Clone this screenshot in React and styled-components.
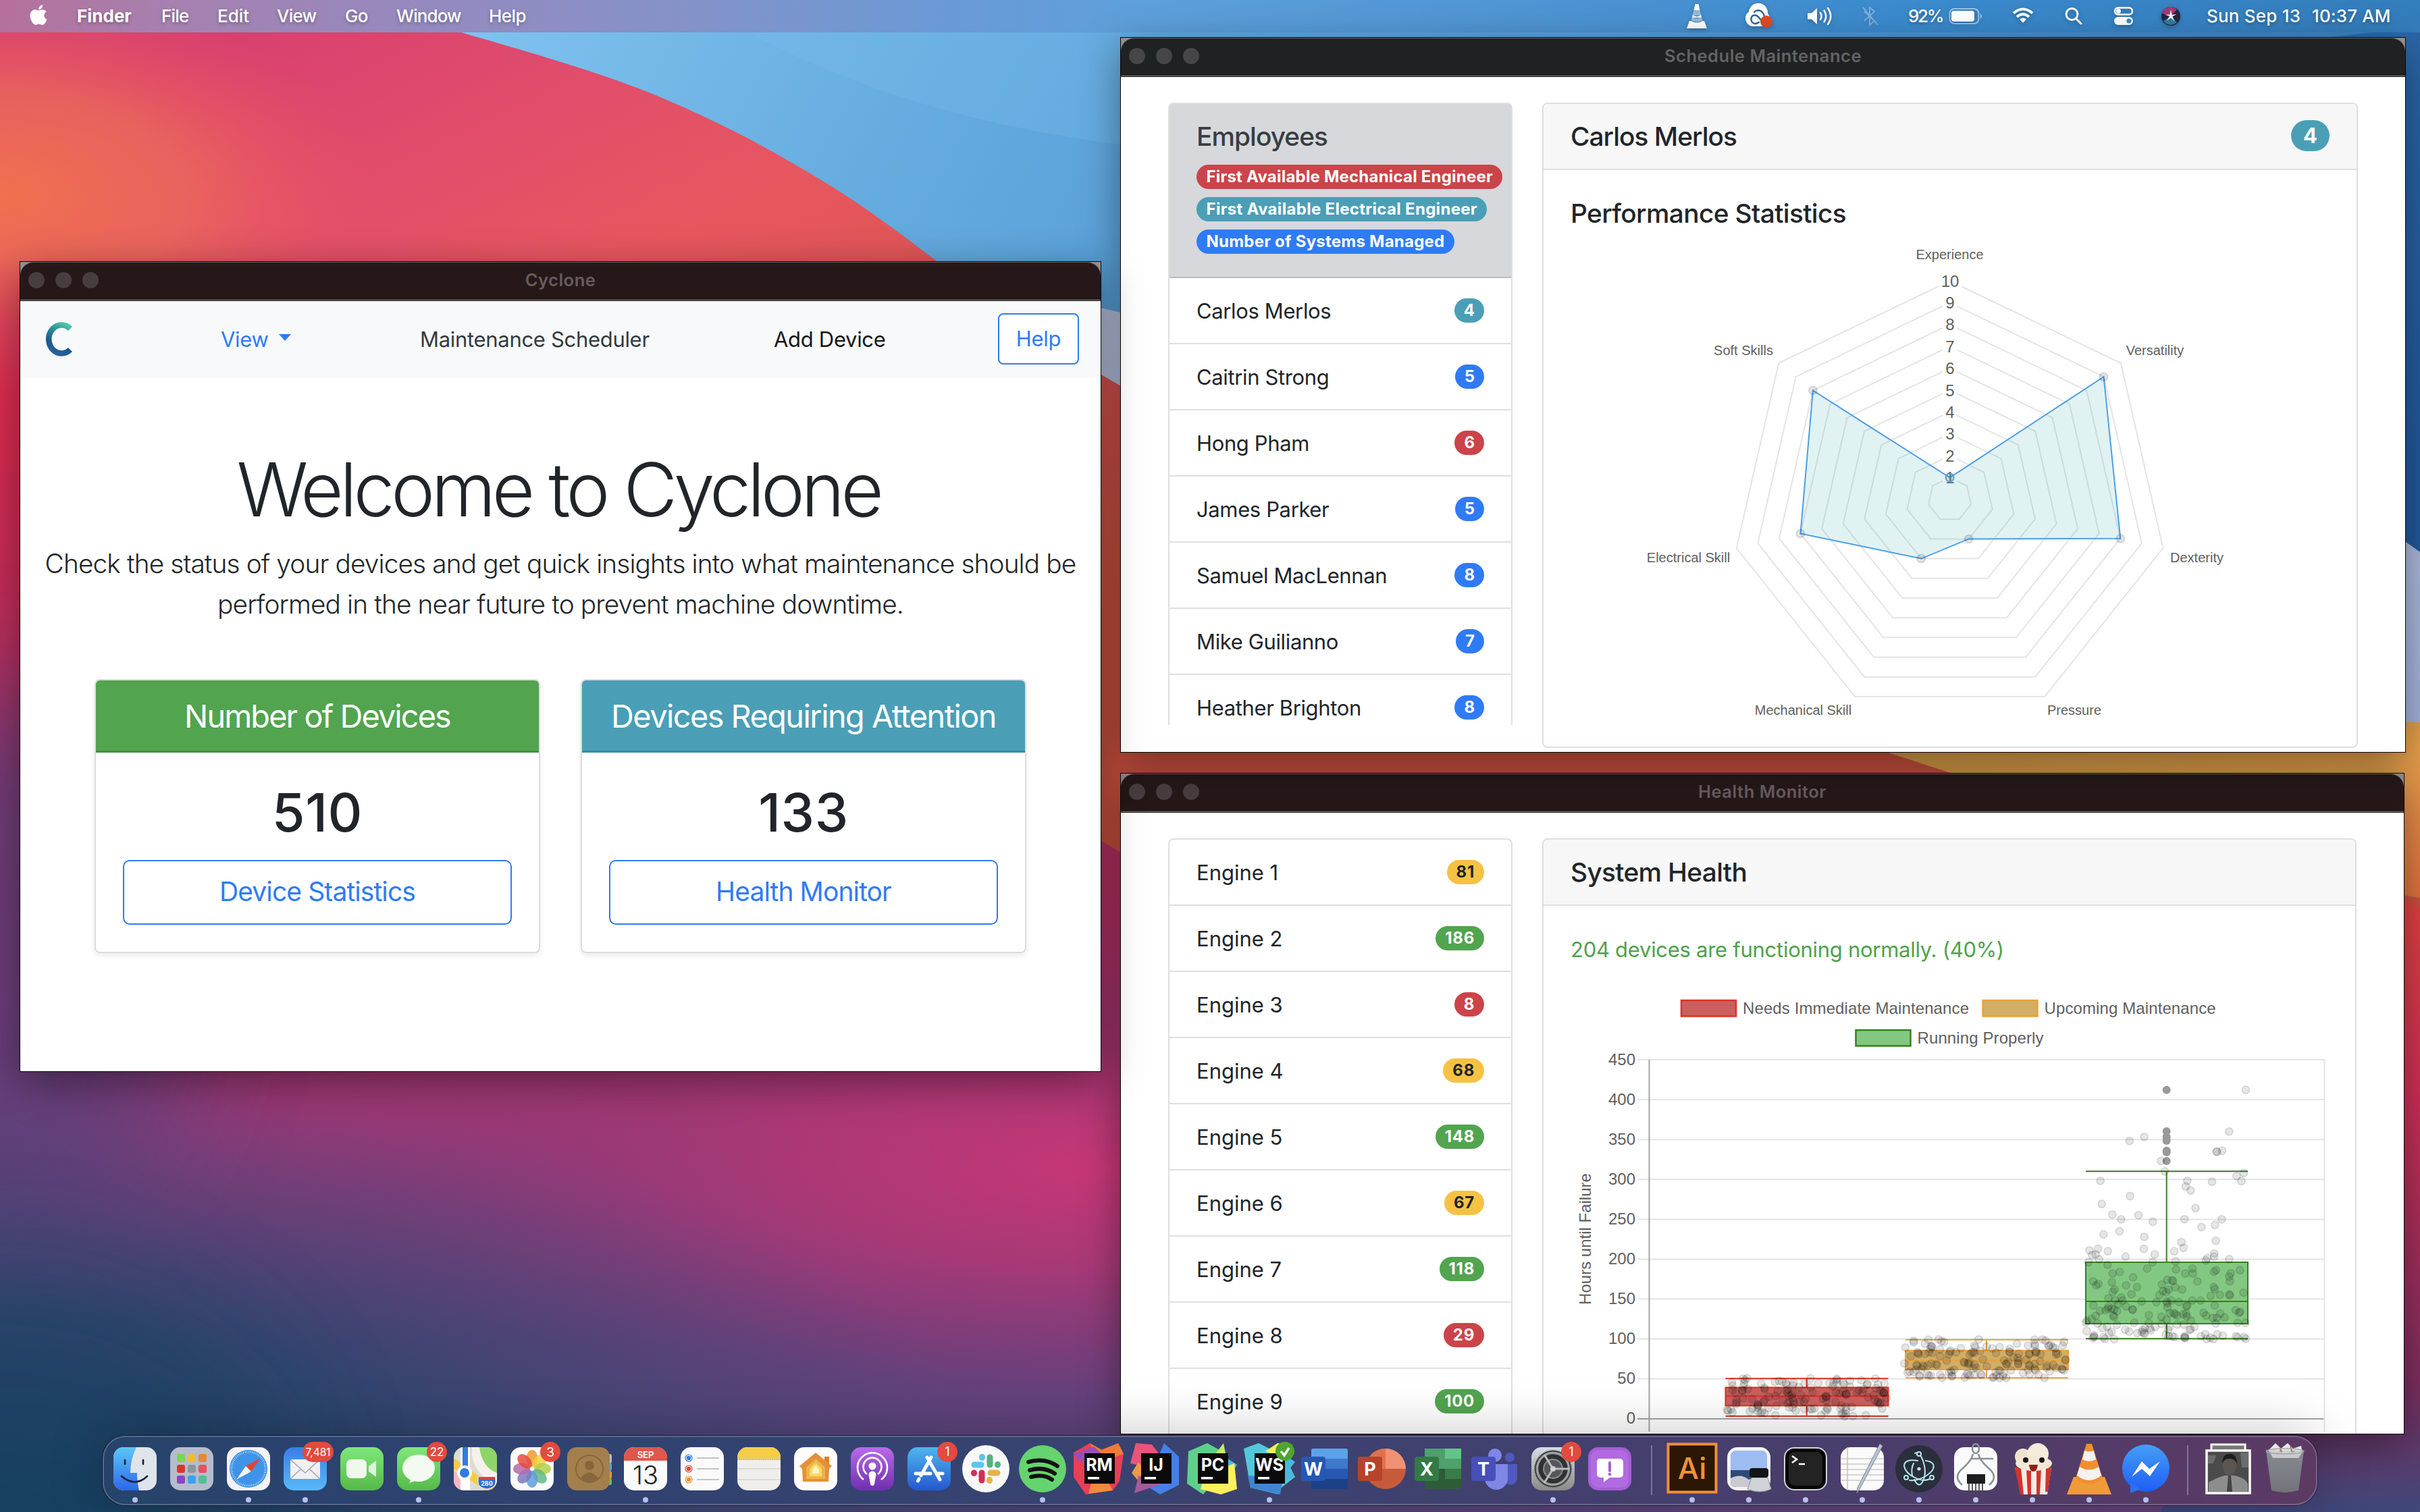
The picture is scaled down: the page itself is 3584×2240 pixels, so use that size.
import React from "react";
import styled, { createGlobalStyle } from "styled-components";
import { FaApple } from "react-icons/fa";

const GlobalStyle = createGlobalStyle`
  * { box-sizing: border-box; }
  html, body { margin: 0; padding: 0; overflow: hidden; }
  body { font-family: Inter, "Liberation Sans", sans-serif; color: #212529; }
  svg { display: block; overflow: visible; }
`;

/* ---------- desktop ---------- */

const Desktop = styled.main`
  position: relative;
  width: 3584px;
  height: 2240px;
  overflow: hidden;
  display: flex;
  flex-direction: column;
  justify-content: space-between;
  background: #5aa2da;
`;

const WallpaperLayer = styled.div`
  position: absolute;
  inset: 0;
`;

function Wallpaper() {
  return (
    <WallpaperLayer>
      <svg width="3584" height="2240" viewBox="0 0 3584 2240">
        <defs>
          <linearGradient id="sky" x1="0.15" y1="0" x2="1" y2="0.3">
            <stop offset="0" stopColor="#86c8f5" />
            <stop offset="0.25" stopColor="#67addf" />
            <stop offset="0.55" stopColor="#4b94d3" />
            <stop offset="1" stopColor="#22599b" />
          </linearGradient>
          <linearGradient id="haze" x1="0" y1="0" x2="0" y2="1">
            <stop offset="0" stopColor="#b9c2de" />
            <stop offset="1" stopColor="#9fb0dd" />
          </linearGradient>
          <linearGradient id="flame" gradientUnits="userSpaceOnUse" x1="420" y1="0" x2="1000" y2="1200">
            <stop offset="0" stopColor="#d7406f" />
            <stop offset="0.2" stopColor="#e04c6c" />
            <stop offset="0.42" stopColor="#e7575f" />
            <stop offset="1" stopColor="#c8503f" />
          </linearGradient>
          <radialGradient id="ember">
            <stop offset="0" stopColor="#f0714f" />
            <stop offset="0.5" stopColor="#ee6b58" stopOpacity="0.75" />
            <stop offset="1" stopColor="#e8575e" stopOpacity="0" />
          </radialGradient>
          <linearGradient id="blush" gradientUnits="userSpaceOnUse" x1="0" y1="380" x2="0" y2="720">
            <stop offset="0" stopColor="#dc2d50" stopOpacity="0" />
            <stop offset="0.6" stopColor="#dc2d50" />
            <stop offset="1" stopColor="#d42a50" />
          </linearGradient>
          <linearGradient id="amber" x1="0" y1="0" x2="1" y2="1">
            <stop offset="0" stopColor="#c99a45" />
            <stop offset="0.6" stopColor="#e8a14c" />
            <stop offset="1" stopColor="#e0703f" />
          </linearGradient>
          <linearGradient id="deep" gradientUnits="userSpaceOnUse" x1="160" y1="700" x2="0" y2="2240">
            <stop offset="0" stopColor="#d42a50" />
            <stop offset="0.25" stopColor="#b72f60" />
            <stop offset="0.5" stopColor="#aa3470" />
            <stop offset="0.64" stopColor="#8c3b78" />
            <stop offset="0.78" stopColor="#66417b" />
            <stop offset="0.9" stopColor="#4b4679" />
            <stop offset="1" stopColor="#354873" />
          </linearGradient>
          <radialGradient id="rose">
            <stop offset="0" stopColor="#c73776" />
            <stop offset="0.45" stopColor="#b13877" stopOpacity="0.75" />
            <stop offset="1" stopColor="#8c3b78" stopOpacity="0" />
          </radialGradient>
          <radialGradient id="navy">
            <stop offset="0" stopColor="#173f60" />
            <stop offset="0.45" stopColor="#29456c" stopOpacity="0.8" />
            <stop offset="1" stopColor="#4b4779" stopOpacity="0" />
          </radialGradient>
          <linearGradient id="edge" gradientUnits="userSpaceOnUse" x1="0" y1="1300" x2="0" y2="2240">
            <stop offset="0" stopColor="#e2453f" />
            <stop offset="0.35" stopColor="#cf2f57" />
            <stop offset="0.8" stopColor="#7d2f5f" />
            <stop offset="1" stopColor="#3f4779" />
          </linearGradient>
          <filter id="soft" x="-40%" y="-40%" width="180%" height="180%">
            <feGaussianBlur stdDeviation="90" />
          </filter>
        </defs>
        <rect width="3584" height="2240" fill="url(#sky)" />
        <path d="M1090 40 C1300 150 1480 190 1659 214 C2300 280 3000 100 3584 40 L3584 0 L1000 0Z" fill="#79bdec" opacity="0.28" />
        <path d="M1500 440 C1640 450 1720 470 1900 560 L3400 700 C3500 760 3560 800 3584 818 L3584 1240 L1500 1240Z" fill="url(#haze)" />
        <path d="M0 0 L520 0 C580 12 630 28 683 48 C800 82 890 108 971 141 C1060 178 1130 215 1200 257 C1270 298 1330 343 1386 386 C1470 450 1560 515 1660 572 C1800 650 2000 800 2500 980 L3584 1100 L3584 1420 L0 1420Z" fill="url(#flame)" />
        <ellipse cx="0" cy="290" rx="560" ry="300" fill="url(#ember)" />
        <rect x="0" y="380" width="800" height="700" fill="url(#blush)" />
        <path d="M0 700 C600 700 1300 1060 1659 1262 L2000 1420 L3584 1420 L3584 2240 L0 2240Z" fill="url(#deep)" />
        <path d="M2793 1114 C3000 1180 3300 1290 3584 1330 L3584 1070 L2600 1060Z" fill="url(#amber)" />
        <path d="M3540 1318 L3584 1345 L3584 2240 L3200 2240Z" fill="url(#edge)" />
        <ellipse cx="1640" cy="1730" rx="1050" ry="330" fill="url(#rose)" />
        <ellipse cx="-60" cy="1440" rx="340" ry="420" fill="#57407b" opacity="0.75" filter="url(#soft)" />
        <ellipse cx="0" cy="2240" rx="1500" ry="640" fill="url(#navy)" />
        <ellipse cx="0" cy="2200" rx="420" ry="300" fill="#173f61" opacity="0.5" filter="url(#soft)" />
      </svg>
    </WallpaperLayer>
  );
}

/* ---------- menu bar ---------- */

const MenuBarStrip = styled.header`
  position: relative;
  height: 48px;
  display: flex;
  justify-content: space-between;
  align-items: center;
  padding: 0 42px 0 43px;
  color: #fff;
  font-size: 26px;
  font-weight: 500;
  text-shadow: 0 2px 5px rgba(0, 0, 0, 0.3);
  background: linear-gradient(90deg, #b5709c 0, #a681b0 260px, #9689be 600px, #8592c8 1000px, #6a9ad6 1400px, #5da0db 1700px, #4b92d2 2400px, #3b8bce 2800px, #347dbc 3584px);
`;

const MenuGroup = styled.nav`
  display: flex;
  align-items: center;
  height: 48px;
  padding-bottom: 1px;
`;

const MenuItem = styled.span`
  margin-left: ${(p) => p.$gap}px;
  width: ${(p) => p.$w}px;
  white-space: pre;
  font-weight: ${(p) => (p.$bold ? 700 : 500)};
  letter-spacing: ${(p) => p.$ls || 0}em;
`;

const StatusIcon = styled.svg`
  width: ${(p) => p.$w}px;
  height: 48px;
  margin-left: ${(p) => p.$gap}px;
  filter: drop-shadow(0 2px 3px rgba(0, 0, 0, 0.25));
`;

const AppleMark = styled(FaApple)`
  width: 28px;
  height: 34px;
  margin-bottom: 3px;
`;

function MenuBar() {
  return (
    <MenuBarStrip>
      <MenuGroup>
        <AppleMark />
        <MenuItem $gap={43} $w={82} $bold>Finder</MenuItem>
        <MenuItem $gap={43} $w={42} $ls={-0.03}>File</MenuItem>
        <MenuItem $gap={41} $w={48}>Edit</MenuItem>
        <MenuItem $gap={40} $w={60} $ls={-0.03}>View</MenuItem>
        <MenuItem $gap={41} $w={35} $ls={-0.03}>Go</MenuItem>
        <MenuItem $gap={41} $w={97} $ls={-0.035}>Window</MenuItem>
        <MenuItem $gap={40} $w={58} $ls={-0.02}>Help</MenuItem>
      </MenuGroup>
      <MenuGroup>
        <StatusIcon $w={32} viewBox="0 0 32 48" fill="#fff">
          <path d="M13.5 6h5l2 9h-9z" />
          <path d="M11.500 15h9l2 8h-13z" opacity=".45" />
          <path d="M10 22q6 5 12 0l1 4h-14z" />
          <path d="M9 25q7 4 14 0l1.500 5q-8.500 5-17 0z" opacity=".45" />
          <path d="M5 31h2.500q8.500 5 17 0H27l4 11H1z" />
        </StatusIcon>
        <StatusIcon $w={44} $gap={54} viewBox="0 0 44 48">
          <path d="M12 39A12 12 0 0 1 7 17.500 14 14 0 0 1 35 20q5 5 2 13l-8 6z" fill="#fff" />
          <path d="M22 33q-6 4-10 0-4-6 1-10 5-2 9 3l5 6" fill="none" stroke="#2b669f" strokeWidth="2.400" strokeLinecap="round" />
          <path d="M15 18q5-5 11-1 4 4 4 9" fill="none" stroke="#2b669f" strokeWidth="2.400" strokeLinecap="round" />
          <circle cx="33" cy="32" r="9" fill="#dd4d26" />
        </StatusIcon>
        <StatusIcon $w={38} $gap={49} viewBox="0 0 38 48" fill="none" stroke="#fff" strokeWidth="2.500" strokeLinecap="round">
          <path d="M1 19.500h6l8-7.500v24l-8-7.500H1z" fill="#fff" stroke="none" />
          <path d="M20 19q3 5 0 10M25.500 15.500q5.500 8.500 0 17M31 12q8.500 12 0 24" />
        </StatusIcon>
        <StatusIcon $w={24} $gap={44} viewBox="0 0 24 48" fill="none" stroke="#fff" strokeWidth="2" opacity=".3">
          <path d="M3 17l15 14-7 6V11l7 6L3 31M1 11l22 26" />
        </StatusIcon>
        <MenuItem $gap={44} $w={58} $ls={-0.09}>92%</MenuItem>
        <StatusIcon $w={50} $gap={2} viewBox="0 0 50 48">
          <rect x="1.500" y="13" width="43" height="22" rx="7" fill="none" stroke="#fff" strokeOpacity=".5" strokeWidth="2" />
          <rect x="4" y="16" width="34" height="16" rx="4" fill="#fff" />
          <path d="M47 20q4 4 0 8z" fill="#fff" opacity=".6" />
        </StatusIcon>
        <StatusIcon $w={32} $gap={44} viewBox="0 0 32 48" fill="none" stroke="#fff" strokeWidth="4">
          <path d="M2 19.500q14-12 28 0M7 25q9-8 18 0" />
          <path d="M16 34l-5-5.500q5-4 10 0z" fill="#fff" stroke="none" />
        </StatusIcon>
        <StatusIcon $w={27} $gap={46} viewBox="0 0 27 48" fill="none" stroke="#fff" strokeWidth="3" strokeLinecap="round">
          <circle cx="10.500" cy="21" r="8.500" />
          <path d="M17 28l7 7" />
        </StatusIcon>
        <StatusIcon $w={30} $gap={45} viewBox="0 0 30 48">
          <rect x="2" y="11.500" width="26" height="10" rx="5" fill="none" stroke="#fff" strokeWidth="2.500" />
          <circle cx="7.500" cy="16.500" r="3.500" fill="#fff" />
          <rect x="1" y="25" width="28" height="12" rx="6" fill="#fff" />
          <circle cx="23" cy="31" r="3.600" fill="#3c86c6" />
        </StatusIcon>
        <StatusIcon $w={30} $gap={40} viewBox="0 0 30 48">
          <circle cx="15" cy="24" r="14" fill="#25243f" />
          <path d="M2 20a13 13 0 0 1 22-6l-9 10z" fill="#c23f86" opacity=".8" />
          <path d="M4 31a13 13 0 0 0 20 2l-9-9z" fill="#3a8fb8" opacity=".8" />
          <path d="M15 14l1.500 8 7-1-6 3.500 3 7-5.500-5-6 4 4-6.500-6-2 6.500-.5z" fill="#eafcff" />
        </StatusIcon>
        <MenuItem $gap={38} $w={156} $ls={0.008}>Sun Sep 13</MenuItem>
        <MenuItem $gap={0} $w={118} $ls={0.004}>10:37 AM</MenuItem>
      </MenuGroup>
    </MenuBarStrip>
  );
}

/* ---------- window chrome ---------- */

const WindowFrame = styled.section`
  position: absolute;
  left: ${(p) => p.$x}px;
  top: ${(p) => p.$y}px;
  width: ${(p) => p.$w}px;
  height: ${(p) => p.$h}px;
  display: flex;
  flex-direction: column;
  background: #fff;
  box-shadow: 0 0 0 1px #0b0708, 0 16px 56px rgba(0, 0, 0, 0.42);
`;

const TitleBarBack = styled.div`
  flex: none;
  height: 58px;
  background: #908f8e;
  border-bottom: 1px solid #000;
`;

const TitleBar = styled.div`
  height: 56px;
  display: grid;
  grid-template-columns: 150px 1fr 150px;
  align-items: center;
  border-top: 1px solid #6d6869;
  border-radius: 20px 20px 0 0;
  background: ${(p) => (p.$warm ? "#261819" : "#202123")};
`;

const TrafficLights = styled.div`
  display: flex;
  gap: 16px;
  padding: 0 0 3px 12px;
`;

const Light = styled.i`
  width: 24px;
  height: 24px;
  border-radius: 50%;
  background: ${(p) => (p.$warm ? "#4a3d3f" : "#464648")};
`;

const WindowTitle = styled.h2`
  margin: 0 0 4px;
  text-align: center;
  font-size: 25.5px;
  font-weight: 600;
  letter-spacing: 0.02em;
  color: ${(p) => (p.$warm ? "#685b5d" : "#626365")};
`;

const WindowBody = styled.div`
  flex: 1;
  min-height: 0;
  overflow: hidden;
`;

function Window({ title, warm, x, y, w, h, children }) {
  return (
    <WindowFrame $x={x} $y={y} $w={w} $h={h}>
      <TitleBarBack>
        <TitleBar $warm={warm}>
          <TrafficLights>
            <Light $warm={warm} />
            <Light $warm={warm} />
            <Light $warm={warm} />
          </TrafficLights>
          <WindowTitle $warm={warm}>{title}</WindowTitle>
        </TitleBar>
      </TitleBarBack>
      <WindowBody>{children}</WindowBody>
    </WindowFrame>
  );
}

/* ---------- Cyclone home ---------- */

const Navbar = styled.nav`
  height: 114px;
  display: flex;
  align-items: center;
  padding: 0 32px 2px 36px;
  background: #f7f9fa;
  font-size: 31px;
  letter-spacing: -0.01em;
`;

const NavLink = styled.a`
  display: flex;
  align-items: center;
  gap: 15px;
  margin-left: ${(p) => p.$gap}px;
  width: ${(p) => p.$w}px;
  white-space: nowrap;
  color: ${(p) => p.$color};
`;

const Caret = styled.i`
  border: 9px solid transparent;
  border-top: 10px solid #2f7bf6;
  border-bottom: 0;
  margin-top: -4px;
`;

const HelpButton = styled.button`
  margin-left: auto;
  width: 120px;
  height: 76px;
  padding: 0 0 1px;
  border: 2px solid #2f7bf6;
  border-radius: 8px;
  background: #fff;
  color: #2f7bf6;
  font: inherit;
  letter-spacing: inherit;
`;

const Hero = styled.div`
  display: flex;
  flex-direction: column;
  align-items: center;
  padding-top: 98px;
  text-align: center;
`;

const HeroTitle = styled.h1`
  margin: 0 6px 13px 0;
  font-size: 109.5px;
  line-height: 134px;
  font-weight: 300;
  letter-spacing: -0.0495em;
`;

const Lead = styled.p`
  margin: 0;
  font-size: 38.8px;
  line-height: 60px;
  font-weight: 300;
  letter-spacing: -0.0226em;
  white-space: pre-line;
`;

const CardDeck = styled.div`
  display: flex;
  gap: 60px;
  margin-top: 81px;
`;

const StatCard = styled.article`
  width: 660px;
  height: 406px;
  border: 2px solid #dcdcdc;
  border-radius: 8px;
  overflow: hidden;
  background: #fff;
  box-shadow: 0 4px 8px rgba(0, 0, 0, 0.08);
`;

const StatHeader = styled.header`
  height: 107px;
  line-height: 106px;
  border-bottom: 3px solid rgba(0, 0, 0, 0.14);
  background: ${(p) => p.$color};
  color: #fff;
  font-size: 46.8px;
  letter-spacing: ${(p) => p.$ls}em;
`;

const StatBody = styled.div`
  display: flex;
  flex-direction: column;
  align-items: stretch;
  gap: 24px;
  padding: 40px;
`;

const StatNumber = styled.strong`
  font-size: 79px;
  line-height: 96px;
  font-weight: 500;
  letter-spacing: 0.008em;
`;

const OutlineButton = styled.button`
  height: 96px;
  margin-top: -1px;
  padding: 0 0 3px;
  border: 2px solid #2f7bf6;
  border-radius: 10px;
  background: #fff;
  color: #2f7bf6;
  font: inherit;
  font-size: 39px;
  letter-spacing: -0.023em;
`;

function CycloneLogo() {
  return (
    <svg width="46" height="54" viewBox="0 0 46 54">
      <defs>
        <linearGradient id="cyc" x1="0.8" y1="0" x2="0.4" y2="1">
          <stop offset="0" stopColor="#4cc3a5" />
          <stop offset="0.35" stopColor="#2b8a99" />
          <stop offset="0.75" stopColor="#1c5a8c" />
          <stop offset="1" stopColor="#2a5f9e" />
        </linearGradient>
      </defs>
      <path d="M38 12 A19 21 0 1 0 38 43" fill="none" stroke="url(#cyc)" strokeWidth="8.500" />
    </svg>
  );
}

function CycloneWindow() {
  return (
    <Window title="Cyclone" warm x={30} y={388} w={1600} h={1199}>
      <Navbar>
        <CycloneLogo />
        <NavLink $gap={215} $w={110} $color="#2f7bf6">View <Caret /></NavLink>
        <NavLink $gap={185} $w={342} $color="#343a40">Maintenance Scheduler</NavLink>
        <NavLink $gap={182} $w={170} $color="#141619">Add Device</NavLink>
        <HelpButton>Help</HelpButton>
      </Navbar>
      <Hero>
        <HeroTitle>Welcome to Cyclone</HeroTitle>
        <Lead>
          {"Check the status of your devices and get quick insights into what maintenance should be\nperformed in the near future to prevent machine downtime."}
        </Lead>
        <CardDeck>
          <StatCard>
            <StatHeader $color="#52a44f" $ls={-0.04}>Number of Devices</StatHeader>
            <StatBody>
              <StatNumber>510</StatNumber>
              <OutlineButton>Device Statistics</OutlineButton>
            </StatBody>
          </StatCard>
          <StatCard>
            <StatHeader $color="#4a9fb6" $ls={-0.0325}>Devices Requiring Attention</StatHeader>
            <StatBody>
              <StatNumber>133</StatNumber>
              <OutlineButton>Health Monitor</OutlineButton>
            </StatBody>
          </StatCard>
        </CardDeck>
      </Hero>
    </Window>
  );
}

/* ---------- list + detail panes ---------- */

const TONES = {
  red: ["#cb444a", "#fff"],
  teal: ["#4a9fb6", "#fff"],
  blue: ["#2f7bf6", "#fff"],
  green: ["#52a44f", "#fff"],
  yellow: ["#f6c244", "#212529"],
};

const Split = styled.div`
  display: flex;
  align-items: flex-start;
  gap: 44px;
  padding: 38px 0 0 70px;
  height: 100%;
`;

const List = styled.ul`
  flex: none;
  width: 510px;
  height: ${(p) => p.$h}px;
  margin: 0;
  padding: 0;
  list-style: none;
  overflow: hidden;
  border: 2px solid #dfdfdf;
  border-bottom: 0;
  border-radius: 8px 8px 0 0;
`;

const ListHeading = styled.li`
  height: 260px;
  margin: -2px -2px 0;
  padding: 24px 40px 0;
  border: 2px solid #b9bbbe;
  border-radius: 8px 8px 0 0;
  background: #d6d8db;
  display: flex;
  flex-direction: column;
  align-items: flex-start;
  gap: 12px;
`;

const ListTitle = styled.h3`
  margin: 0 0 6px;
  font-size: 38.8px;
  line-height: 48px;
  font-weight: 500;
  letter-spacing: -0.024em;
  color: #383d41;
`;

const Row = styled.li`
  height: 98px;
  padding: 0 40px;
  display: flex;
  align-items: center;
  justify-content: space-between;
  border-bottom: 2px solid #dfdfdf;
  font-size: 31px;
  letter-spacing: ${(p) => (p.$tight ? -0.012 : 0)}em;
`;

const Pill = styled.span`
  height: 36px;
  line-height: 36px;
  padding: 0 14px;
  border-radius: 20px;
  font-size: 24px;
  font-weight: 700;
  letter-spacing: ${(p) => p.$ls ?? 0.03}em;
  margin-top: -1px;
  white-space: nowrap;
  background: ${(p) => TONES[p.$tone][0]};
  color: ${(p) => TONES[p.$tone][1]};
`;

const LegendPill = styled(Pill)`
  margin: 0;
  padding: 0 14.5px;
`;

const HeaderPill = styled(Pill)`
  height: 46px;
  line-height: 46px;
  padding: 0 18px;
  border-radius: 24px;
  font-size: 31px;
  margin: 0 0 2px;
`;

const Panel = styled.article`
  flex: none;
  width: ${(p) => p.$w}px;
  height: ${(p) => p.$h}px;
  border: 2px solid #dfdfdf;
  border-radius: 8px;
  overflow: hidden;
`;

const PanelHeader = styled.header`
  height: 98px;
  display: flex;
  align-items: center;
  justify-content: space-between;
  padding: 0 40px;
  border-bottom: 2px solid #dfdfdf;
  background: #f7f7f7;
`;

const PanelTitle = styled.h3`
  margin: 0;
  font-size: 38.8px;
  line-height: 48px;
  font-weight: 500;
  letter-spacing: ${(p) => p.$ls}em;
`;

const PanelBody = styled.div`
  display: flex;
  flex-direction: column;
  gap: ${(p) => p.$gap}px;
  padding: 40px 40px 0;
`;

const HealthNote = styled.p`
  margin: 0;
  font-size: 31px;
  line-height: 50px;
  letter-spacing: -0.009em;
  color: #4fa24c;
`;

const ChartText = styled.text`
  font-family: "Liberation Sans", Arial, sans-serif;
  font-size: ${(p) => p.$size}px;
  fill: #606060;
  text-anchor: ${(p) => p.$anchor || "middle"};
  dominant-baseline: central;
`;

const EMPLOYEES = [
  ["Carlos Merlos", 4, "teal"],
  ["Caitrin Strong", 5, "blue"],
  ["Hong Pham", 6, "red"],
  ["James Parker", 5, "blue"],
  ["Samuel MacLennan", 8, "blue"],
  ["Mike Guilianno", 7, "blue"],
  ["Heather Brighton", 8, "blue"],
];

const SKILLS = [
  ["Experience", 1, 2887.5, 377],
  ["Versatility", 9, 3191.5, 519],
  ["Dexterity", 8, 3253.5, 826],
  ["Pressure", 2, 3072, 1052],
  ["Mechanical Skill", 3, 2670.5, 1052],
  ["Electrical Skill", 7, 2500.5, 826],
  ["Soft Skills", 8, 2582, 519],
];

const spoke = (i, v) => {
  const a = (i * 2 * Math.PI) / 7;
  return [2887.6 + Math.sin(a) * v * 32.4, 740 - Math.cos(a) * v * 32.4];
};

function RadarChart() {
  const data = SKILLS.map((s, i) => spoke(i, s[1]));
  const steps = [1, 2, 3, 4, 5, 6, 7, 8, 9, 10];
  return (
    <svg width="1124" height="750" viewBox="2326 348 1124 750">
      {steps.map((v) => (
        <polygon key={v} points={SKILLS.map((_, i) => spoke(i, v).join()).join(" ")} fill="none" stroke="#e4e4e4" strokeWidth="2" />
      ))}
      {steps.map((v) => (
        <g key={v}>
          <rect x={v === 10 ? 2871 : 2877} y={740 - v * 32.4 - 16} width={v === 10 ? 35 : 21} height="30" fill="#fff" />
          <ChartText $size={24} x="2888" y={740 - v * 32.4}>{v}</ChartText>
        </g>
      ))}
      <polygon points={data.map((p) => p.join()).join(" ")} fill="rgba(75,180,185,0.17)" stroke="#4c9fe6" strokeWidth="2" />
      {data.map(([x, y], i) => (
        <circle key={i} cx={x} cy={y} r="6" fill="rgba(0,0,0,0.1)" stroke={i ? "rgba(0,0,0,0.13)" : "#4c9fe6"} strokeWidth="2" />
      ))}
      {SKILLS.map(([name, , x, y]) => (
        <ChartText key={name} $size={20} x={x} y={y}>{name}</ChartText>
      ))}
    </svg>
  );
}

function ScheduleWindow() {
  return (
    <Window title="Schedule Maintenance" x={1660} y={56} w={1902} h={1058}>
      <Split>
        <List $h={922}>
          <ListHeading>
            <ListTitle>Employees</ListTitle>
            <LegendPill $tone="red" $ls={0.0085}>First Available Mechanical Engineer</LegendPill>
            <LegendPill $tone="teal" $ls={0.0125}>First Available Electrical Engineer</LegendPill>
            <LegendPill $tone="blue" $ls={0.0095}>Number of Systems Managed</LegendPill>
          </ListHeading>
          {EMPLOYEES.map(([name, n, tone]) => (
            <Row key={name} $tight>
              {name}
              <Pill $tone={tone} $ls={0}>{n}</Pill>
            </Row>
          ))}
        </List>
        <Panel $w={1208} $h={956}>
          <PanelHeader>
            <PanelTitle $ls={-0.025}>Carlos Merlos</PanelTitle>
            <HeaderPill $tone="teal" $ls={0}>4</HeaderPill>
          </PanelHeader>
          <PanelBody $gap={8}>
            <PanelTitle $ls={-0.016}>Performance Statistics</PanelTitle>
            <RadarChart />
          </PanelBody>
        </Panel>
      </Split>
    </Window>
  );
}

/* ---------- health monitor ---------- */

const ENGINES = [
  [81, "yellow"], [186, "green"], [8, "red"], [68, "yellow"], [148, "green"],
  [67, "yellow"], [118, "green"], [29, "red"], [100, "green"],
];

const GREEN_POINTS = [
  [798,104],[724,289],[281,331],[347,313],[670,379],[668,378],[693,374],[421,420],[438,466],[789,473],[757,487],[778,509],[648,512],
  [538,508],[531,533],[553,551],[152,508],[284,576],[158,611],[205,658],[321,661],[244,679],[385,690],[575,629],[526,679],[691,679],
  [661,704],[601,714],[237,732],[166,746],[347,757],[665,774],[512,781],[521,806],[345,810],[141,810],[103,817],[185,821],[480,821],
  [658,831],[657,845],[393,835],[131,835],[115,838],[264,845],[146,856],[724,856],[627,852],[621,862],[99,870],[384,870],[486,866],
  [184,881],[360,898],[488,902],[561,898],[772,905],[238,913],[206,920],[529,920],[563,920],[657,912],[666,905],[731,919],[724,934],
  [297,937],[120,955],[203,959],[143,966],[133,973],[266,973],[315,980],[425,969],[449,948],[470,950],[475,953],[583,955],[727,955],
  [484,981],[515,991],[455,991],[430,998],[215,991],[207,1001],[290,1012],[414,1016],[445,1003],[656,980],[660,990],[788,1005],
  [642,1019],[683,1015],[725,1013],[727,1017],[188,1030],[245,1026],[217,1039],[250,1040],[335,1044],[401,1047],[467,1040],[501,1047],
  [560,1040],[597,1040],[446,1044],[449,1052],[231,1056],[121,1062],[266,1067],[294,1080],[296,1081],[188,1067],[186,1076],[202,1076],
  [213,1080],[175,1083],[150,1086],[226,1087],[450,1070],[537,1063],[534,1066],[660,1062],[753,1083],[773,1090],[768,1095],[610,1094],
  [684,1098],[622,1107],[460,1096],[478,1096],[484,1101],[494,1107],[520,1101],[533,1098],[536,1111],[367,1105],[423,1112],[131,1108],
  [209,1107],[213,1113],[113,1122],[446,1126],[652,1117],[670,1117],[704,1115],[554,1129],[92,1130],[88,1138],[140,1142],[302,1139],
  [367,1140],[664,1142],[762,1139],[797,1139],[225,1148],[424,1144],[493,1147],[522,1147],[396,1157],[459,1156],[161,1162],[182,1156],
  [570,1158],[372,1163],[350,1163],[262,1169],[280,1178],[340,1171],[376,1173],[202,1179],[91,1176],[345,1184],[349,1188],[316,1185],
  [336,1180],[453,1170],[548,1170],[553,1168],[190,1185],[443,1192],[124,1194],[122,1200],[126,1203],[165,1203],[171,1211],[213,1212],
  [455,1198],[472,1199],[480,1202],[528,1198],[524,1203],[528,1208],[599,1199],[618,1190],[624,1211],[640,1205],[654,1211],[671,1190],
  [696,1196],[754,1199],[762,1203],[790,1203],[798,1210],[118,1206],[528,1204],
];

const AMBER_POINTS = [
  [841,169],[873,139],[873,146],[930,134],[970,133],[981,141],[991,144],[917,152],[940,163],[943,168],[944,164],[975,177],[938,175],
  [1056,172],[1108,160],[1112,168],[1125,133],[1155,165],[1178,173],[1206,167],[1273,152],[1316,160],[1341,134],[1372,133],[1383,138],
  [1342,153],[1342,162],[1395,160],[1397,163],[1403,158],[1412,167],[1455,144],[1450,160],[1420,172],[1345,185],[1348,190],[1346,192],
  [1245,175],[1243,187],[1245,190],[1280,196],[1320,196],[1321,200],[1365,198],[1424,200],[1425,190],[1431,197],[890,194],[892,199],
  [888,190],[862,208],[917,197],[933,190],[946,193],[975,208],[1009,200],[1013,188],[1037,190],[1016,183],[1090,200],[1097,193],
  [1103,188],[1108,193],[1141,222],[1192,193],[1130,184],[1001,227],[837,240],[885,245],[887,250],[908,249],[912,254],[903,264],
  [928,248],[941,241],[960,243],[963,247],[1067,233],[1070,236],[1083,238],[1086,243],[1089,235],[1109,245],[1105,263],[1114,258],
  [1156,252],[1223,226],[1231,241],[1233,244],[1238,234],[1276,215],[1278,229],[1278,239],[1278,243],[1260,213],[1309,223],[1320,246],
  [1322,250],[1341,242],[1341,263],[1363,230],[1462,222],[1460,226],[1413,246],[1387,258],[1391,249],[1425,260],[1447,264],[1448,266],
  [850,280],[857,276],[872,278],[881,268],[895,294],[897,298],[926,289],[932,294],[940,294],[983,303],[976,290],[1010,280],[1018,273],
  [1020,280],[1020,295],[1022,297],[1030,268],[1071,302],[1078,286],[1083,287],[1089,293],[1109,290],[1133,288],[1136,290],[1178,303],
  [1183,301],[1190,279],[1193,293],[1203,270],[1208,272],[1222,283],[1231,304],[1250,270],[1219,296],[1296,282],[1316,268],[1322,288],
  [1345,270],[1356,290],[1379,304],[1400,275],[1454,270],[1205,304],
];

const RED_POINTS = [
  [213,307],[220,313],[228,306],[170,324],[172,338],[217,328],[214,342],[283,329],[336,322],[352,317],[365,322],[379,326],[381,333],
  [408,325],[406,337],[474,306],[451,331],[475,345],[504,328],[429,345],[547,327],[563,325],[575,308],[576,313],[576,326],[600,325],
  [604,333],[627,316],[626,344],[671,314],[695,330],[692,335],[725,307],[760,329],[735,333],[560,342],[295,348],[297,354],[172,357],
  [210,358],[211,361],[184,370],[231,353],[347,363],[386,355],[380,361],[386,370],[405,371],[401,380],[391,382],[436,380],[338,384],
  [313,388],[297,401],[213,393],[187,402],[188,413],[186,420],[248,398],[270,421],[271,425],[270,427],[292,410],[366,403],[404,394],
  [408,406],[385,417],[393,410],[409,420],[431,411],[455,397],[449,410],[482,368],[535,384],[533,387],[536,390],[522,395],[534,404],
  [572,367],[599,364],[609,375],[612,378],[613,376],[654,367],[661,359],[680,353],[674,370],[718,380],[697,390],[727,349],[744,358],
  [750,366],[757,368],[758,370],[757,371],[768,394],[723,404],[734,410],[745,415],[742,420],[736,411],[571,410],[585,373],[151,447],
  [155,450],[166,443],[172,457],[239,453],[249,440],[269,435],[270,452],[281,460],[286,456],[296,461],[311,438],[342,428],[338,470],
  [391,435],[405,436],[417,450],[450,441],[472,441],[479,443],[489,440],[538,437],[540,444],[533,452],[515,470],[590,440],[594,464],
  [600,463],[611,433],[611,450],[610,464],[606,475],[633,433],[638,474],[688,470],[751,440],[594,428],
];

const BOXES = [
  { stroke: "#e32f23", fill: "#c9605f", cx: 2675.7, x: 2555.5, w: 241, top: 2055.5, bottom: 2082.5, mid: 2068.3, lo: 2098, hi: 2042.3 },
  { stroke: "#e9a23b", fill: "#d3ae67", cx: 2942, x: 2822, w: 241, top: 2000.7, bottom: 2029, mid: 2015.5, lo: 2041.3, hi: 1984.7 },
  { stroke: "#37801f", fill: "#82c882", cx: 3208.7, x: 3089, w: 240, top: 1870, bottom: 1961, mid: 1928, lo: 1983.3, hi: 1735.3 },
];

const DOTS = [
  ...RED_POINTS.map(([x, y]) => [2500 + x / 2.6133, 1940 + y / 3]),
  ...AMBER_POINTS.map(([x, y]) => [2500 + x / 2.6133, 1940 + y / 3]),
  ...GREEN_POINTS.map(([x, y]) => [3060 + x / 3, 1580 + y / 3]),
];

const OUTLIERS = [1614.7, 1676, 1684.3, 1690, 1704.7, 1707, 1720];

const LEGEND = [
  [2489, 1481, "Needs Immediate Maintenance", 0],
  [2935.5, 1481, "Upcoming Maintenance", 1],
  [2747.5, 1525, "Running Properly", 2],
];

const LegendText = styled(ChartText)`
  letter-spacing: 0.0045em;
`;

function BoxPlot() {
  return (
    <svg width="1124" height="700" viewBox="2326 1440 1124 700">
      {LEGEND.map(([x, y, name, i]) => (
        <g key={name}>
          <rect x={x + 1} y={y + 1} width="81" height="23.500" fill={BOXES[i].fill} stroke={BOXES[i].stroke} strokeWidth="2.500" />
          <LegendText $size={24} $anchor="start" x={x + 92} y={y + 12.5}>{name}</LegendText>
        </g>
      ))}
      {[450, 400, 350, 300, 250, 200, 150, 100, 50, 0].map((v, i) => {
        const y = 1570 + i * 59.1;
        return (
          <g key={v}>
            <path d={`M2425 ${y}H3443`} stroke={v ? "#e4e4e4" : "#a4a4a4"} strokeWidth="2" />
            <ChartText $size={24} $anchor="end" x="2422" y={y - 1}>{v}</ChartText>
          </g>
        );
      })}
      <path d="M3442.500 1570V2121" stroke="#e4e4e4" strokeWidth="2" />
      <path d="M2442.500 1570V2121" stroke="#a4a4a4" strokeWidth="2" />
      <ChartText $size={24} transform="translate(2347 1835.500) rotate(-90)">Hours until Failure</ChartText>
      {BOXES.map((b) => (
        <g key={b.stroke} stroke={b.stroke} strokeWidth="2" fill="none">
          <rect x={b.x} y={b.top} width={b.w} height={b.bottom - b.top} fill={b.fill} />
          <path d={`M${b.x} ${b.mid}h${b.w}M${b.x} ${b.lo}h${b.w}M${b.x} ${b.hi}h${b.w}M${b.cx} ${b.hi}V${b.top}M${b.cx} ${b.bottom}V${b.lo}`} />
        </g>
      ))}
      {OUTLIERS.map((y) => (
        <circle key={y} cx="3208.700" cy={y} r="6" fill="#999" />
      ))}
      <g fill="rgba(0,0,0,0.1)" stroke="rgba(0,0,0,0.13)" strokeWidth="1.600">
        {DOTS.map(([x, y], i) => (
          <circle key={i} cx={x} cy={y} r="5.600" />
        ))}
      </g>
    </svg>
  );
}

function HealthWindow() {
  return (
    <Window title="Health Monitor" warm x={1660} y={1146} w={1900} h={978}>
      <Split>
        <List $h={1000}>
          {ENGINES.map(([n, tone], i) => (
            <Row key={i}>
              Engine {i + 1}
              <Pill $tone={tone}>{n}</Pill>
            </Row>
          ))}
        </List>
        <Panel $w={1206} $h={1000}>
          <PanelHeader>
            <PanelTitle $ls={-0.017}>System Health</PanelTitle>
          </PanelHeader>
          <PanelBody $gap={8}>
            <HealthNote>204 devices are functioning normally. (40%)</HealthNote>
            <BoxPlot />
          </PanelBody>
        </Panel>
      </Split>
    </Window>
  );
}

/* ---------- dock ---------- */

const DockBar = styled.footer`
  position: relative;
  align-self: flex-start;
  width: 3280px;
  height: 103px;
  margin: 0 0 10px 152px;
  padding: 0 6px;
  display: flex;
  border-radius: 34px;
  background: linear-gradient(90deg, #26446a 0, #2d4270 14%, #354370 35%, #3f416f 60%, #4a3d6b 80%, #5c3a64 100%);
  box-shadow: inset 0 0 0 2px rgba(255, 255, 255, 0.2), 0 0 0 1px rgba(15, 15, 45, 0.7), 0 0 80px rgba(0, 0, 0, 0.25);
`;

const DockSlot = styled.div`
  width: 84px;
  display: flex;
  flex-direction: column;
  align-items: center;
  padding-top: 7px;
`;

const RunningDot = styled.i`
  width: 8px;
  height: 8px;
  border-radius: 50%;
  background: #b9bfec;
`;

const DockDivider = styled.i`
  width: 2px;
  height: 74px;
  margin: 14px 17px 0 19px;
  background: rgba(190, 180, 215, 0.45);
`;

const IconText = styled.text`
  font-family: Inter, "Liberation Sans", sans-serif;
  font-size: ${(p) => p.$size}px;
  font-weight: ${(p) => p.$weight || 400};
  text-anchor: ${(p) => p.$anchor || "middle"};
  fill: ${(p) => p.$fill || "#fff"};
`;

const Tile = ({ fill }) => <rect x="-32" y="-32" width="64" height="64" rx="15" fill={fill} />;

const Notice = ({ x = 27, w = 30, size = 22, children }) => (
  <g>
    <rect x={x - w / 2} y="-40" width={w} height="30" rx="15" fill="#e24b3f" />
    <IconText $size={size} x={x} y={-25 + size * 0.36}>{children}</IconText>
  </g>
);

const JetBrains = ({ label, shapes }) => (
  <g>
    {shapes.map(([d, f], i) => (
      <path key={i} d={d} fill={f} />
    ))}
    <rect x="-22" y="-23" width="45" height="45" fill="#0a0a0a" />
    <IconText $size={25} $weight={700} x="0" y="3">{label}</IconText>
    <rect x="-17" y="12" width="17" height="3.500" fill="#fff" />
  </g>
);

const OfficeTag = ({ fill, label }) => (
  <g>
    <rect x="-37" y="-18" width="36" height="36" rx="4" fill={fill} />
    <IconText $size={27} $weight={700} x="-19" y="10">{label}</IconText>
  </g>
);

const PETALS = ["#f09a2e", "#f3d03c", "#b5cf4a", "#62b884", "#5f9fd8", "#7b78c0", "#b967a8", "#e5493f"];
const PADS = ["#7bd551", "#f3b93d", "#e58a35", "#d33a2c", "#8e959c", "#ec4d60", "#8a45c4", "#35a3f2", "#54bf97"];

const ICONS = [
  { running: true, art: (
    <g>
      <Tile fill="#dfe3ea" />
      <path d="M2-32H-17a15 15 0 0 0-15 15v34a15 15 0 0 0 15 15H6Q3 20 3 6H-7Q-7-14 2-32z" fill="url(#blueFace)" />
      <path d="M-20 11Q0 28 18 11M-15-13v6M12-13v6" stroke="#16202e" strokeWidth="2.600" fill="none" strokeLinecap="round" />
    </g>) },
  { art: (
    <g>
      <Tile fill="#b6bccb" />
      {PADS.map((c, i) => (
        <rect key={i} x={-22 + (i % 3) * 16} y={-22 + Math.floor(i / 3) * 16} width="12" height="12" rx="3" fill={c} />
      ))}
    </g>) },
  { running: true, art: (
    <g>
      <Tile fill="#f3f3f4" />
      <circle r="28" fill="#3f93e8" />
      <circle r="25" fill="none" stroke="#cfe6fb" strokeWidth="3" strokeDasharray="0.8 1.800" />
      <path d="M18-16L-4-4 4 4z" fill="#e04434" />
      <path d="M-18 16L-4-4 4 4z" fill="#f5f5f5" />
    </g>) },
  { running: true, art: (
    <g>
      <Tile fill="url(#mailBlue)" />
      <rect x="-22" y="-14" width="44" height="29" rx="3" fill="#f0f0f1" />
      <path d="M-21-13L0 6 21-13M-21 14L-6 0M21 14L6 0" fill="none" stroke="#a3a6ab" strokeWidth="1.600" />
      <Notice x={19} w={46} size={15.5}>7,481</Notice>
    </g>) },
  { art: (
    <g>
      <Tile fill="url(#leaf)" />
      <rect x="-23" y="-14" width="30" height="28" rx="7" fill="#eef9ec" />
      <path d="M10-4L21-12V12L10 4z" fill="#dff3dc" />
    </g>) },
  { running: true, art: (
    <g>
      <Tile fill="url(#leaf)" />
      <ellipse cy="-1" rx="24" ry="20" fill="#f2faf1" />
      <path d="M-13 12Q-11 20-15 21-8 20-3 16z" fill="#f2faf1" />
      <Notice size={17}>22</Notice>
    </g>) },
  { art: (
    <g>
      <clipPath id="mapClip"><rect x="-32" y="-32" width="64" height="64" rx="15" /></clipPath>
      <g clipPath="url(#mapClip)">
        <rect x="-32" y="-32" width="64" height="64" fill="#dcdcd2" />
        <path d="M-5-32H32V8Q5 5-5-20z" fill="#8fd468" />
        <path d="M-5-32H6Q10-2 32 6V20Q0 12-5-20z" fill="#f4f2ea" />
        <path d="M-32-16L32 30V44L-32 0z" fill="#f4cd48" />
        <path d="M-32 2L-20 12V32H-32z" fill="#f2b9c2" />
        <rect x="-22" y="-32" width="14" height="64" fill="#fff" />
        <rect x="-19" y="-32" width="8" height="40" fill="#2f7de0" />
        <circle cx="-16" cy="6" r="11" fill="#fff" />
        <circle cx="-16" cy="6" r="7" fill="#2f7de0" />
        <path d="M4 12h26v8q0 8-13 10Q4 28 4 20z" fill="#2d6fd0" stroke="#fff" />
        <path d="M5 12h24v4H5z" fill="#d5463f" />
      </g>
      <IconText $size={9} $weight={700} x="17" y="25">280</IconText>
    </g>) },
  { art: (
    <g>
      <Tile fill="#fbfbfb" />
      {PETALS.map((c, i) => (
        <ellipse key={i} cx="0" cy="-15.500" rx="8.500" ry="12.500" fill={c} opacity=".85" transform={`rotate(${i * 45})`} />
      ))}
      <Notice size={19}>3</Notice>
    </g>) },
  { art: (
    <g>
      <rect x="20" y="-22" width="14" height="14" rx="3" fill="#b9bcc0" />
      <rect x="20" y="-9" width="14" height="12" rx="3" fill="#5aa7e0" />
      <rect x="20" y="3" width="14" height="12" rx="3" fill="#eb9a3a" />
      <rect x="20" y="14" width="14" height="10" rx="3" fill="#5fc460" />
      <rect x="-32" y="-32" width="63" height="64" rx="14" fill="#a37f4d" />
      <circle r="20" cx="1" fill="none" stroke="#86663a" strokeWidth="2" />
      <circle cx="1" cy="-5" r="7" fill="#86663a" />
      <path d="M-12 14Q1-3 14 14 1 24-12 14z" fill="#86663a" />
    </g>) },
  { running: true, art: (
    <g>
      <Tile fill="#fafafa" />
      <path d="M-32-12v-5a15 15 0 0 1 15-15h34a15 15 0 0 1 15 15v5z" fill="#e0574b" />
      <IconText $size={13} $weight={600} y="-16.500">SEP</IconText>
      <IconText $size={38} $weight={300} $fill="#222" y="23">13</IconText>
    </g>) },
  { art: (
    <g>
      <Tile fill="#fafafa" />
      {["#2f7de0", "#e0473b", "#ea9433"].map((c, i) => (
        <g key={c}>
          <circle cx="-20" cy={-16 + i * 16} r="5" fill="none" stroke={c} strokeWidth="1.200" />
          <circle cx="-20" cy={-16 + i * 16} r="3.300" fill={c} />
          <path d={`M-8 ${-16 + i * 16}H25`} stroke="#c4c4c6" strokeWidth="2" />
        </g>
      ))}
    </g>) },
  { art: (
    <g>
      <Tile fill="#efeeec" />
      <path d="M-32-15v-2a15 15 0 0 1 15-15h34a15 15 0 0 1 15 15v2z" fill="#f7cd48" />
      <path d="M-32-14H32" stroke="#a8a49c" strokeWidth="2" strokeDasharray="1.500 1.200" />
      <path d="M-32 0H32M-32 16H32" stroke="#d3d3d6" strokeWidth="1.500" />
    </g>) },
  { art: (
    <g>
      <Tile fill="#fdfcfa" />
      <rect x="13" y="-18" width="7" height="14" fill="#d5832b" />
      <path d="M0-24L24-4 20 0 19 19H-19L-20 0-24-4z" fill="#e2913a" />
      <path d="M0-15L14-2V15H-14V-2z" fill="#efb447" />
      <path d="M0-9L9 0V11H-9V0z" fill="#f8d868" />
      <path d="M0-5L5 1V7H-5V1z" fill="#fff6bd" />
    </g>) },
  { art: (
    <g>
      <Tile fill="url(#pod)" />
      <path d="M-13 16A22 22 0 1 1 13 16M-8 8A13.500 13.500 0 1 1 8 8" fill="none" stroke="#fff" strokeWidth="2.600" />
      <circle cy="-4" r="5.500" fill="#fff" />
      <path d="M-5.500 9a5.500 5.500 0 0 1 11 0L3 22a3 3 0 0 1-6 0z" fill="#fff" />
    </g>) },
  { art: (
    <g>
      <Tile fill="url(#store)" />
      <path d="M3-17L-12 10M-15 15l-1.500 3M-3-17L16 16M-20 7H2M11 7H20" stroke="#fff" strokeWidth="5" strokeLinecap="round" fill="none" />
      <Notice size={18}>1</Notice>
    </g>) },
  { art: (
    <g>
      <circle r="35" fill="#f8f8f8" />
      <g strokeLinecap="round" strokeWidth="9">
        <path d="M-17-6H-7" stroke="#61c3ec" /><path d="M-5.500-17.500v1" stroke="#61c3ec" />
        <path d="M6-17V-6" stroke="#58b182" /><path d="M17.500-6v-.5" stroke="#58b182" />
        <path d="M-6 17V6" stroke="#cf3058" /><path d="M-17.500 6v.5" stroke="#cf3058" />
        <path d="M17 6H7" stroke="#e4b34a" /><path d="M5.500 17.500v-1" stroke="#e4b34a" />
      </g>
    </g>) },
  { running: true, art: (
    <g>
      <circle r="35" fill="#65d36e" />
      <path d="M-21-10Q3-17 22-4M-19 2Q2-4 18 7M-17 12Q1 7 14 16" fill="none" stroke="#111" strokeWidth="6" strokeLinecap="round" />
    </g>) },
  { art: <JetBrains label="RM" shapes={[
    ["M-14-38L2-28 28-38 36-22 30 18 20 32-20 38-38 12-38-24z", "#e93e55"], ["M-14-38L4-28 28-38 36-22 0-10z", "#ef7c36"],
    ["M-38-22L-8-33 6-20-30-10z", "#9a50b8"], ["M-16 37L20 32 10 14-10 14z", "#f08a3c"]]} /> },
  { art: <JetBrains label="IJ" shapes={[
    ["M-30-38L-6-36 6-20-20-4-38-8z", "#e8547a"], ["M12-38L34-18 34 24 6 38-16 24 0-10z", "#4580e6"],
    ["M-36 6L-26-10-10 10-28 16z", "#ee9a45"], ["M-32 36L-26 10 10 22z", "#a55c9b"]]} /> },
  { art: <JetBrains label="PC" shapes={[
    ["M-36-26L-8-38 10-28 0 20-14 38-38 22z", "#5fd08c"], ["M4-22L16-38 20-18z", "#c6e86a"],
    ["M18-18L36-6 24 14z", "#4ab8ea"], ["M22-4L32-8 36 30 12 38-18 30-12 10z", "#fbf05c"]]} /> },
  { running: true, art: (
    <g>
      <JetBrains label="WS" shapes={[
        ["M-38-30L-16-38 4-28 14-36 38 12 10 34 14 38-28 28z", "#54c8d8"], ["M-6-26L12-38 34-36 20-14z", "#f7ee5a"],
        ["M-32 10L-28 28 16 38 20 14z", "#3f86d2"], ["M22-22L38-10 30 0 38 12 24 18z", "#49b9dc"]]} />
      <circle cx="23" cy="-26" r="14" fill="#4ea52f" />
      <path d="M17-26l5 6 7-11" fill="none" stroke="#fff" strokeWidth="3.500" />
    </g>) },
  { art: (
    <g>
      <rect x="-22" y="-30" width="54" height="60" rx="3" fill="#2859b0" />
      <path d="M-22-15V-27a3 3 0 0 1 3-3H29a3 3 0 0 1 3 3v12z" fill="#5ca2e8" />
      <rect x="-22" y="-15" width="54" height="15" fill="#3f78ca" />
      <path d="M-22 15H32V27a3 3 0 0 1-3 3H-19a3 3 0 0 1-3-3z" fill="#1d4187" />
      <OfficeTag fill="#2557b5" label="W" />
    </g>) },
  { art: (
    <g>
      <circle cx="4" r="30" fill="#c65b3b" />
      <path d="M4 0V-30A30 30 0 0 1 34 0z" fill="#ef9273" />
      <path d="M4 0V-30A30 30 0 0 0-26 0z" fill="#df724d" />
      <OfficeTag fill="#b7432a" label="P" />
    </g>) },
  { art: (
    <g>
      <rect x="-22" y="-30" width="54" height="60" rx="3" fill="#2c5c38" />
      <rect x="-22" y="-30" width="30" height="30" fill="#4ea06c" />
      <rect x="8" y="-30" width="24" height="15" fill="#63c388" />
      <rect x="8" y="-15" width="24" height="15" fill="#4ea06c" />
      <rect x="8" y="0" width="24" height="15" fill="#397b49" />
      <OfficeTag fill="#337a45" label="X" />
    </g>) },
  { art: (
    <g>
      <circle cx="20" cy="-17" r="7" fill="#5158bd" />
      <path d="M12-7H31V14a10 10 0 0 1-19 4z" fill="#5158bd" />
      <circle cx="-2" cy="-20" r="10" fill="#7f87e6" />
      <path d="M-17-7H17V14a17 17 0 0 1-34 0z" fill="#7f87e6" />
      <OfficeTag fill="#474fb8" label="T" />
    </g>) },
  { running: true, art: (
    <g>
      <Tile fill="url(#steel)" />
      <circle r="27" fill="#2f3133" />
      <circle r="23.500" fill="none" stroke="#9da1a3" strokeWidth="3.500" />
      <circle r="27" fill="none" stroke="#555" strokeWidth="2" strokeDasharray="1.500 1.500" />
      <circle r="14" fill="#55585a" />
      <circle r="14" fill="none" stroke="#8d9193" strokeWidth="2" />
      <path d="M0 0H25M0 0L-13-21M0 0L-13 21" stroke="#b9bdbf" strokeWidth="3" />
      <circle r="4" fill="#d0d3d5" />
      <Notice size={18}>1</Notice>
    </g>) },
  { art: (
    <g>
      <Tile fill="#a55fd6" />
      <rect x="-28" y="-28" width="56" height="56" rx="12" fill="#b06be0" />
      <path d="M-15-15H15a5 5 0 0 1 5 5V8a5 5 0 0 1-5 5H0L-9 20V13H-14a5 5 0 0 1-5-5V-10a5 5 0 0 1 4-5z" fill="#fff" />
      <path d="M0-9V3" stroke="#a55fd6" strokeWidth="4" strokeLinecap="round" />
      <circle cy="8" r="2.300" fill="#a55fd6" />
    </g>) },
  { divider: true },
  { running: true, art: (
    <g>
      <rect x="-35.500" y="-36.500" width="71" height="71" fill="#2b1703" stroke="#f0913a" strokeWidth="4" />
      <IconText $size={44} $weight={500} $fill="#f0913a" y="15">Ai</IconText>
    </g>) },
  { running: true, art: (
    <g>
      <Tile fill="#f3f3f4" />
      <rect x="-27" y="-27" width="54" height="54" rx="8" fill="#9dbdf0" />
      <path d="M-27 2H27V19a8 8 0 0 1-8 8H-19a8 8 0 0 1-8-8z" fill="#2d4b78" />
      <path d="M-27 14Q-12 6 0 16 10 10 27 18V19a8 8 0 0 1-8 8H-19a8 8 0 0 1-8-8z" fill="#c9cbd0" />
      <path d="M4 13H28L33 30Q16 38-2 30z" fill="#cfd2d6" stroke="#8f9398" />
      <rect x="1" y="-1" width="28" height="14" rx="4" fill="#141414" />
    </g>) },
  { running: true, art: (
    <g>
      <Tile fill="#cfd4d8" />
      <rect x="-30" y="-30" width="60" height="60" rx="13" fill="#060606" />
      <rect x="-25" y="-25" width="50" height="50" rx="9" fill="#232323" />
      <path d="M-20-19l7 5-7 5M-10-7H-1" fill="none" stroke="#fff" strokeWidth="2.600" />
    </g>) },
  { running: true, art: (
    <g>
      <Tile fill="#fafafa" />
      <path d="M-32-15H32M-32-7H32M-32 1H32M-32 9H32M-32 17H32" stroke="#c9c9cb" strokeWidth="1.500" />
      <path d="M-22-32V32" stroke="#eeb0b0" strokeWidth="1.500" />
      <path d="M26-37L30-34-4 30-8 36-7 28z" fill="#b9c5d2" stroke="#77838f" />
    </g>) },
  { running: true, art: (
    <g>
      <circle r="35" fill="#2b2e3b" />
      <g fill="none" stroke="#b5e8ef" strokeWidth="2" strokeLinecap="round">
        <path d="M-6-23Q0-27 6-12 12 6 6 18 0 30-7 16" />
        <path d="M10-12Q26-10 20 2 12 12-2 16-10 18-14 17" />
        <path d="M-2-12Q-22-15-22-4-20 6-8 12 6 20 16 15" />
        <path d="M-8-8Q-12 0-10 10" />
      </g>
      <g fill="#2b2e3b" stroke="#b5e8ef" strokeWidth="2">
        <circle cx="0" cy="-22" r="3" /><circle cx="-19" cy="13" r="3" /><circle cx="19" cy="13" r="3" />
      </g>
      <circle r="2.600" fill="#b5e8ef" />
    </g>) },
  { running: true, art: (
    <g>
      <Tile fill="#fafafa" />
      <g fill="none" stroke="#8a9299" strokeWidth="2.600">
        <ellipse cy="-30" rx="5" ry="7" />
        <path d="M-4-22Q-6-12-20 0-34 12-20 24M4-22Q6-12 20 0 34 12 20 24M-8-15H26" />
      </g>
      <rect x="-13" y="8" width="27" height="14" fill="#1d1d1f" />
      <path d="M-10 22v10M-5 22v10M0 22v10M5 22v10M10 22v10" stroke="#5c5c5e" strokeWidth="2" />
    </g>) },
  { running: true, art: (
    <g>
      <path d="M-26-2L28-2 22 38-16 38z" fill="#f3ece6" />
      <path d="M-26-2h9l4 40h-5zM-9 0h7v38h-5zM6 0h7l-2 38H6zM20-2h8l-5 36h-4z" fill="#d2342c" />
      <circle cx="-14" cy="-18" r="12" fill="#efe2cf" /><circle cx="8" cy="-22" r="16" fill="#f6ecdc" /><ellipse cx="2" cy="-8" rx="27" ry="11" fill="#f3e7d5" />
      <circle cx="-10" cy="-13" r="4" fill="#221612" /><circle cx="14" cy="-13" r="4" fill="#221612" />
      <path d="M-5-6H8Q7 4 1 4-4 4-5-6z" fill="#8e1f1c" />
    </g>) },
  { running: true, art: (
    <g>
      <path d="M-23 12H23L33 38H-33z" fill="#f19a38" />
      <path d="M-4-37H4L20 14Q0 32-20 14z" fill="#ef8f31" />
      <path d="M-7-27Q0-24 7-27L10-14Q0-8-10-14z" fill="#f4f2f0" />
      <path d="M-14-3Q0 6 14-3L18 10Q0 24-18 10z" fill="#f4f2f0" />
    </g>) },
  { running: true, art: (
    <g>
      <circle cy="-1" r="35" fill="url(#chat)" />
      <path d="M-23 20V36L-8 30z" fill="#2c70f5" />
      <path d="M-21 12L-6-11 5 0 21-11 6 11-6 0z" fill="#fff" />
    </g>) },
  { divider: true },
  { art: (
    <g>
      <rect x="-25" y="-36" width="50" height="12" fill="#777" stroke="#fff" strokeWidth="3" />
      <rect x="-32" y="-27" width="64" height="63" fill="#4b4b4b" stroke="#fff" strokeWidth="3.500" />
      <path d="M-30-20h12l-4 12h-8zM18-24h12v22H20z" fill="#6d6d6d" />
      <path d="M-29 34V20Q-14 12-6 10H10Q26 14 29 22V34z" fill="#8d8d8d" />
      <ellipse cx="2" cy="-5" rx="10" ry="15" fill="#5d5552" />
      <path d="M-9-8Q-8-23 2-22 12-23 13-8 8-16 2-15-5-16-9-8z" fill="#1c1c1c" />
      <path d="M0 10h4l2 24H-2z" fill="#444" />
    </g>) },
  { art: (
    <g>
      <path d="M-24-28L-14-38-6-30 4-38 12-30 24-34 26-24H-26z" fill="#e9e9e9" />
      <path d="M-8-30l5 6M8-34l2 8M-18-30l4 5" stroke="#c96a4a" strokeWidth="2" />
      <path d="M-28-27H28L20 32Q0 38-20 32z" fill="url(#bin)" opacity=".92" />
      <path d="M-24-27L-14-33-6-24 4-34 10-24 22-30 26-25 20-16-18-16z" fill="#dcdcdc" opacity=".8" />
      <ellipse cy="-26" rx="28" ry="4" fill="none" stroke="#a3a7aa" strokeWidth="1.500" />
    </g>) },
];

const grad = (id, a, b) => (
  <linearGradient id={id} x1="0" y1="0" x2="0" y2="1">
    <stop offset="0" stopColor={a} />
    <stop offset="1" stopColor={b} />
  </linearGradient>
);

const IconDefs = styled.svg`
  position: absolute;
  width: 0;
  height: 0;
`;

function Dock() {
  return (
    <DockBar>
      <IconDefs>
        <defs>
          {grad("blueFace", "#5ac8f7", "#2f66ea")}
          {grad("mailBlue", "#3a7eeb", "#57b9f6")}
          {grad("leaf", "#7fe77a", "#56ba49")}
          {grad("pod", "#ba6ae8", "#6f2fae")}
          {grad("store", "#4fb5ef", "#2558cf")}
          {grad("steel", "#d3dde3", "#8c8a86")}
          {grad("chat", "#459ff7", "#1f5df6")}
          {grad("bin", "#8b9195", "#74797c")}
        </defs>
      </IconDefs>
      {ICONS.map((icon, i) =>
        icon.divider ? (
          <DockDivider key={i} />
        ) : (
          <DockSlot key={i}>
            <svg width="84" height="84" viewBox="-42 -42 84 84">{icon.art}</svg>
            {icon.running && <RunningDot />}
          </DockSlot>
        )
      )}
    </DockBar>
  );
}

export default function App() {
  return (
    <>
      <GlobalStyle />
      <Desktop>
        <Wallpaper />
        <MenuBar />
        <HealthWindow />
        <ScheduleWindow />
        <CycloneWindow />
        <Dock />
      </Desktop>
    </>
  );
}
